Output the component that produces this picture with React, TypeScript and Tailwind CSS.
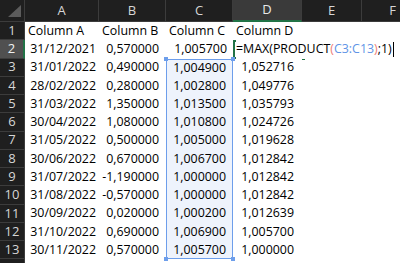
import React from "react";

const colWidths: { [key: string]: string } = {
  A: "w-[74px]",
  B: "w-[67px]",
  C: "w-[67px]",
  D: "w-[69px]",
  E: "w-[60px]",
  F: "w-[62px]",
};

const rows: string[][] = [
  ["Column A", "Column B", "Column C", "Column D"],
  ["31/12/2021", "0,570000", "1,005700", ""],
  ["31/01/2022", "0,490000", "1,004900", "1,052716"],
  ["28/02/2022", "0,280000", "1,002800", "1,049776"],
  ["31/03/2022", "1,350000", "1,013500", "1,035793"],
  ["30/04/2022", "1,080000", "1,010800", "1,024726"],
  ["31/05/2022", "0,500000", "1,005000", "1,019628"],
  ["30/06/2022", "0,670000", "1,006700", "1,012842"],
  ["31/07/2022", "-1,190000", "1,000000", "1,012842"],
  ["31/08/2022", "-0,570000", "1,000000", "1,012842"],
  ["30/09/2022", "0,020000", "1,000200", "1,012639"],
  ["31/10/2022", "0,690000", "1,006900", "1,005700"],
  ["30/11/2022", "0,570000", "1,005700", "1,000000"],
  ["", "", "", ""],
];

function Handle({ className }: { className: string }) {
  return <span className={`absolute w-[4px] h-[4px] bg-[#6d9eeb] ${className}`} />;
}

function Formula() {
  return (
    <span className="relative z-10 whitespace-nowrap bg-white pr-[1px] flex items-center">
      <span>=MAX(PRODUCT</span>
      <span className="text-[#ee7d77]">(</span>
      <span className="text-[#5f94e6]">C3:C13</span>
      <span className="text-[#ee7d77]">)</span>
      <span>;1)</span>
      <span className="ml-[1px] w-[1px] h-[15px] bg-black" />
    </span>
  );
}

export default function App() {
  return (
    <div className="w-[400px] h-[263px] overflow-hidden bg-white font-['Open_Sans',sans-serif] text-[12.4px] text-black">
      {/* column headers */}
      <div className="flex h-[22px] bg-[#1f1f1f] text-[#d6d6d6] text-[13px]">
        <div className="w-[25px] shrink-0 relative border-r border-b border-[#3c3c3c]">
          <span className="absolute right-[3px] bottom-[4px] w-0 h-0 border-l-[13px] border-l-transparent border-b-[12px] border-b-[#5c5c5c]" />
        </div>
        {Object.keys(colWidths).map((c) => (
          <div
            key={c}
            className={`${colWidths[c]} shrink-0 flex items-center justify-center border-r border-[#3c3c3c] ${
              c === "D" ? "bg-[#3a3a3a] border-b-2 border-b-[#217346] text-[#e8e8e8]" : "border-b"
            }`}
          >
            {c}
          </div>
        ))}
      </div>

      {rows.map((r, i) => {
        const n = i + 1;
        const inSel = n >= 3 && n <= 13;
        return (
          <div key={n} className="flex h-[18.27px]">
            <div
              className={`w-[25px] shrink-0 flex items-center justify-center text-[13px] border-b border-[#3c3c3c] ${
                n === 2
                  ? "bg-[#505050] text-[#f0f0f0] border-r-2 border-r-[#217346]"
                  : "bg-[#1f1f1f] text-[#d6d6d6] border-r"
              }`}
            >
              {n <= 13 ? n : ""}
            </div>
            <div className={`${colWidths.A} shrink-0 flex items-center ${n === 1 ? "pl-[3px]" : "justify-end pr-[3px]"}`}>
              {r[0]}
            </div>
            <div className={`${colWidths.B} shrink-0 flex items-center ${n === 1 ? "pl-[3px]" : "justify-end pr-[7px]"}`}>
              {r[1]}
            </div>
            <div
              className={`${colWidths.C} shrink-0 flex items-center relative ${n === 1 ? "pl-[3px]" : "justify-end pr-[6px]"} ${
                inSel ? "bg-[#eef3fc] border-x border-[#6d9eeb]" : ""
              } ${n === 3 ? "border-t" : ""} ${n === 13 ? "border-b" : ""}`}
            >
              {n === 3 && (
                <>
                  <Handle className="left-[-3px] top-[-3px]" />
                  <Handle className="right-[-3px] top-[-3px]" />
                </>
              )}
              {n === 13 && (
                <>
                  <Handle className="left-[-3px] bottom-[-3px]" />
                  <Handle className="right-[-3px] bottom-[-3px]" />
                </>
              )}
              {r[2]}
            </div>
            <div
              className={`${colWidths.D} shrink-0 flex items-center relative ${
                n === 1 ? "pl-[3px]" : n === 2 ? "pl-[1px] border-l-2 border-y-2 border-[#217346]" : "justify-end pr-[8px]"
              }`}
            >
              {n === 2 ? (
                <>
                  <Formula />
                  <span className="absolute right-[-4px] bottom-[-4px] w-[5px] h-[5px] bg-[#217346] border border-white" />
                </>
              ) : (
                r[3]
              )}
            </div>
            <div className={`${colWidths.E} shrink-0`} />
            <div className={`${colWidths.F} shrink-0`} />
          </div>
        );
      })}
    </div>
  );
}
